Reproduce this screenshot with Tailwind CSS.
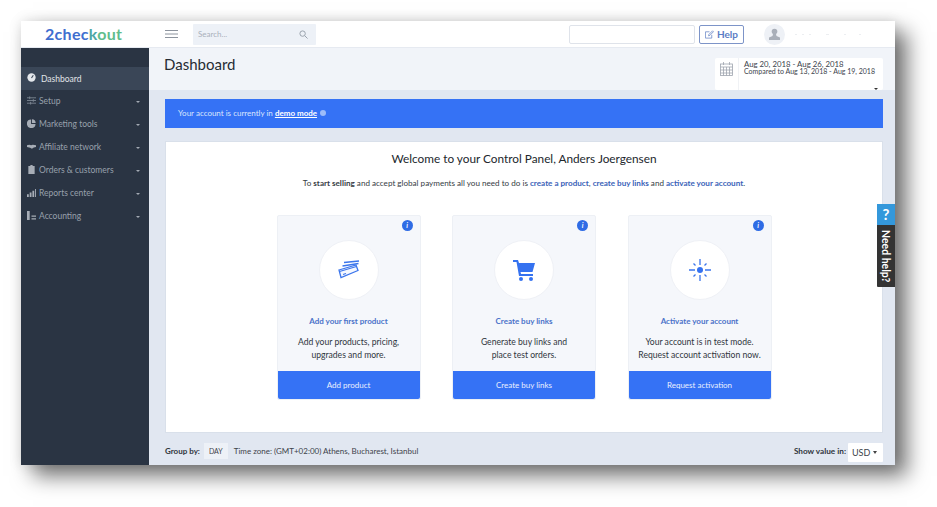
<!DOCTYPE html>
<html lang="en">
<head>
  <meta charset="UTF-8" />
  <title>2checkout Dashboard</title>
  <script src="https://cdn.jsdelivr.net/npm/@tailwindcss/browser@4"></script>
</head>
<body class="bg-white font-['Lato','Liberation_Sans',sans-serif] overflow-hidden">
<div class="w-[937px] h-[507px] pt-[21px] pl-[21px]">
  <div class="relative w-[874px] h-[444px] flex flex-col bg-white shadow-[12px_11px_20px_rgba(0,0,0,0.55),0_0_12px_rgba(0,0,0,0.12)]">

    <!-- Top bar -->
    <header class="h-[27px] shrink-0 flex items-center border-b border-[#e6eaf1]">
      <div class="w-[128px] shrink-0 pl-[24px] text-[16px] leading-none font-bold tracking-[0.3px] text-[#3f6ecf]">2chec<span class="text-[#4fa7a5]">k</span><span class="text-[#61bd8c]">out</span></div>
      <svg class="ml-[16px] w-[13px] h-[8px]" viewBox="0 0 13 8" fill="none" stroke="#8d949e"><path d="M0 .5h13M0 4h13M0 7.5h13"/></svg>
      <div class="ml-[15px] w-[123px] h-[21px] flex items-center justify-between px-[5px] bg-[#edf1f7] rounded-[1px]">
        <span class="text-[8px] text-[#a9b0bb]">Search...</span>
        <svg class="w-[9px] h-[9px] mr-[3px]" viewBox="0 0 10 10" fill="none" stroke="#9aa2ad" stroke-width="1.1"><circle cx="4" cy="4" r="3"/><path d="M6.3 6.3 9.500 9.500"/></svg>
      </div>
      <div class="ml-[253px] w-[126px] h-[19px] bg-white border border-[#dfe3ea] rounded-[2px]"></div>
      <div class="ml-[4px] w-[45px] h-[19px] flex items-center justify-center gap-[3px] border border-[#7d94c8] rounded-[2px] text-[#5a7cc4] text-[10px] font-bold">
        <svg class="w-[9px] h-[9px]" viewBox="0 0 10 10" fill="none" stroke="#6e8bc9" stroke-width=".9"><path d="M7.5 5.5v3.5h-7v-7h4.5M4 6.5l.3-1.500L8.400.9l1 1L5.400 6z"/></svg>
        Help
      </div>
      <div class="ml-[20px] w-[21px] h-[21px] rounded-full bg-[#eef1f6] flex items-center justify-center">
        <svg class="w-[13px] h-[13px]" viewBox="0 0 13 13" fill="#a9afb9"><circle cx="6.500" cy="3.600" r="2.800"/><path d="M5 6h3l.5 2 3.500 1.500V12H1V9.500L4.500 8z"/></svg>
      </div>
      <div class="ml-[10px] flex gap-[5px]">
        <span class="w-[2px] h-[1px] bg-[#eceef1]"></span><span class="w-[2px] h-[1px] bg-[#eceef1]"></span><span class="w-[2px] h-[1px] bg-[#eceef1]"></span>
        <span class="ml-[10px] w-[3px] h-[1px] bg-[#eceef1]"></span><span class="ml-[10px] w-[2px] h-[1px] bg-[#eceef1]"></span><span class="ml-[8px] w-[2px] h-[1px] bg-[#eceef1]"></span>
      </div>
    </header>

    <div class="flex flex-1 min-h-0">
      <!-- Sidebar -->
      <aside class="w-[128px] shrink-0 bg-[#2a3443] pt-[19px] text-[8.500px] text-[#98a0ab]">
        <div class="h-[23px] pt-[1px] flex items-center gap-[5px] pl-[6px] bg-[#3a4657] text-[#e1e4e8]">
          <svg class="w-[9px] h-[9px] -mt-[3px]" viewBox="0 0 10 10"><circle cx="5" cy="5" r="4.600" fill="#e5e8ec"/><path d="M5 5.500 7 2.500" stroke="#3a4657" stroke-width="1.200"/></svg>
          <span>Dashboard</span>
        </div>
        <div class="h-[23px] flex items-center pl-[6px] pr-[9px]">
          <svg class="w-[9px] h-[9px] mr-[3px] -mt-[3px]" viewBox="0 0 10 10" stroke="#7d8793" fill="none"><path d="M0 2h10M0 5h10M0 8h10M3 .5v3M7 3.500v3M4 6.500v3"/></svg>
          <span class="flex-1">Setup</span><span class="w-0 h-0 border-x-[2px] border-x-transparent border-t-[2px] border-t-[#a3aab4]"></span>
        </div>
        <div class="h-[23px] flex items-center pl-[6px] pr-[9px]">
          <svg class="w-[9px] h-[9px] mr-[3px] -mt-[3px]" viewBox="0 0 10 10" fill="#a7adb6"><path d="M4.500.5v5h5A4.800 4.800 0 1 1 4.500.5zM5.500.3a4.500 4.500 0 0 1 4.200 4.200H5.500z"/></svg>
          <span class="flex-1">Marketing tools</span><span class="w-0 h-0 border-x-[2px] border-x-transparent border-t-[2px] border-t-[#a3aab4]"></span>
        </div>
        <div class="h-[23px] flex items-center pl-[6px] pr-[9px]">
          <svg class="w-[9px] h-[9px] mr-[3px] -mt-[3px]" viewBox="0 0 10 10" fill="#a7adb6"><path d="M0 3.500l2.500-.5 2 .5 2-.5 3.500.5v2L7.500 6 5.500 7.500 3.500 6.500 0 5.500z"/></svg>
          <span class="flex-1">Affiliate network</span><span class="w-0 h-0 border-x-[2px] border-x-transparent border-t-[2px] border-t-[#a3aab4]"></span>
        </div>
        <div class="h-[23px] flex items-center pl-[6px] pr-[9px]">
          <svg class="w-[9px] h-[9px] mr-[3px] -mt-[3px]" viewBox="0 0 10 10" fill="#a7adb6"><path d="M1.500 1h2l.5-1h2l.5 1h2v9h-7z"/></svg>
          <span class="flex-1">Orders &amp; customers</span><span class="w-0 h-0 border-x-[2px] border-x-transparent border-t-[2px] border-t-[#a3aab4]"></span>
        </div>
        <div class="h-[23px] flex items-center pl-[6px] pr-[9px]">
          <svg class="w-[9px] h-[9px] mr-[3px] -mt-[3px]" viewBox="0 0 10 10" fill="#a7adb6"><path d="M0 7h2v3H0zM3 5h2v5H3zM6 3h2v7H6zM9 1h1v9H9z"/></svg>
          <span class="flex-1">Reports center</span><span class="w-0 h-0 border-x-[2px] border-x-transparent border-t-[2px] border-t-[#a3aab4]"></span>
        </div>
        <div class="h-[23px] flex items-center pl-[6px] pr-[9px]">
          <svg class="w-[9px] h-[9px] mr-[3px] -mt-[3px]" viewBox="0 0 10 10" fill="#a7adb6"><path d="M0 0h3v10H0zM5 5h5v1.500H5zM5 8h5v1.500H5z"/></svg>
          <span class="flex-1">Accounting</span><span class="w-0 h-0 border-x-[2px] border-x-transparent border-t-[2px] border-t-[#a3aab4]"></span>
        </div>
      </aside>

      <!-- Main -->
      <main class="flex-1 min-w-0 bg-[#e1e7f1] flex flex-col">
        <div class="h-[42px] shrink-0 bg-[#f1f4f9] flex justify-between pl-[15px] pr-[12px]">
          <h1 class="mt-[6px] text-[15px] leading-[20px] text-[#262c33]">Dashboard</h1>
          <div class="relative mt-[10px] w-[168px] h-[32px] bg-white rounded-[2px] flex">
            <div class="w-[24px] flex justify-center pt-[4px] border-r border-[#f0f2f5]">
              <svg class="w-[13px] h-[14px]" viewBox="0 0 13 14" fill="none" stroke="#9fa5af" stroke-width=".8"><rect x=".5" y="2" width="12" height="11.500"/><path d="M.5 5h12M.5 8h12M.5 11h12M3.500 5v8.500M6.500 5v8.500M9.500 5v8.500M3.500 0v3M9.500 0v3"/></svg>
            </div>
            <div class="pl-[5px] pt-[2px] text-[#3c434c] whitespace-nowrap">
              <div class="text-[7.800px] leading-[8px]">Aug 20, 2018 - Aug 26, 2018</div>
              <div class="text-[7px] leading-[7px]">Compared to Aug 13, 2018 - Aug 19, 2018</div>
            </div>
            <span class="absolute right-[5px] bottom-[0px] w-0 h-0 border-x-[2px] border-x-transparent border-t-[2px] border-t-[#333]"></span>
          </div>
        </div>

        <div class="mt-[9px] ml-[16px] mr-[12px] h-[29px] pb-[1px] shrink-0 bg-[#3572f5] flex items-center pl-[13px] text-[8px] text-[#dbe6fd]">
          Your account is currently in&nbsp;<span class="font-bold text-white underline">demo mode</span>
          <span class="ml-[3px] w-[6px] h-[6px] rounded-full bg-[#9dbcf9]"></span>
        </div>

        <section class="mt-[13px] ml-[16px] mr-[12px] h-[292px] shrink-0 bg-white border border-[#d9e0ea] flex flex-col items-center">
          <h2 class="mt-[8px] text-[11.800px] leading-[18px] text-[#22272d]">Welcome to your Control Panel, Anders Joergensen</h2>
          <p class="mt-[9px] text-[8.100px] leading-[12px] text-[#363c44]">To <b>start selling</b> and accept global payments all you need to do is <b class="text-[#3a62b8]">create a product</b>, <b class="text-[#3a62b8]">create buy links</b> and <b class="text-[#3a62b8]">activate your account</b>.</p>

          <div class="mt-[26px] flex gap-[31.500px]">
            <div class="relative w-[144px] h-[185px] bg-[#f5f7fb] border border-[#edf0f5] rounded-[2px] flex flex-col items-center">
              <span class="absolute top-[4px] right-[7px] w-[11px] h-[11px] rounded-full bg-[#2f6ce5] text-white text-[7px] leading-[11px] text-center italic font-bold">i</span>
              <div class="mt-[24px] w-[60px] h-[60px] rounded-full bg-white border border-[#eff1f6] flex items-center justify-center">
                <svg class="w-[22px] h-[20px]" viewBox="0 0 22 20" fill="none" stroke="#3b75ec" stroke-width="1.300"><path d="M6 2.500 21 1M4.500 6l16-2.500"/><path d="M1 10 18 5l2 5.500L3 17.500z" fill="#f5f8ff"/><path d="M1.500 11.500 18.500 6.500M5 14.500l3-1"/></svg>
              </div>
              <div class="mt-[15px] text-[8px] leading-[12px] font-bold text-[#4a72c9]">Add your first product</div>
              <div class="mt-[9px] text-[8.600px] leading-[13px] text-[#30363d] text-center">Add your products, pricing,<br>upgrades and more.</div>
              <div class="mt-auto w-full h-[28px] bg-[#3572f5] rounded-b-[2px] flex items-center justify-center text-[8px] text-[#eaf0fe]">Add product</div>
            </div>

            <div class="relative w-[144px] h-[185px] bg-[#f5f7fb] border border-[#edf0f5] rounded-[2px] flex flex-col items-center">
              <span class="absolute top-[4px] right-[7px] w-[11px] h-[11px] rounded-full bg-[#2f6ce5] text-white text-[7px] leading-[11px] text-center italic font-bold">i</span>
              <div class="mt-[24px] w-[60px] h-[60px] rounded-full bg-white border border-[#eff1f6] flex items-center justify-center">
                <svg class="w-[22px] h-[21px]" viewBox="0 0 22 21" fill="#3572f0"><path d="M0 0h5l1 3h16l-2.500 9H7.500l.5 2h12v2H6L3.500 2H0z"/><circle cx="8" cy="19" r="2"/><circle cx="18" cy="19" r="2"/></svg>
              </div>
              <div class="mt-[15px] text-[8px] leading-[12px] font-bold text-[#4a72c9]">Create buy links</div>
              <div class="mt-[9px] text-[8.600px] leading-[13px] text-[#30363d] text-center">Generate buy links and<br>place test orders.</div>
              <div class="mt-auto w-full h-[28px] bg-[#3572f5] rounded-b-[2px] flex items-center justify-center text-[8px] text-[#eaf0fe]">Create buy links</div>
            </div>

            <div class="relative w-[144px] h-[185px] bg-[#f5f7fb] border border-[#edf0f5] rounded-[2px] flex flex-col items-center">
              <span class="absolute top-[4px] right-[7px] w-[11px] h-[11px] rounded-full bg-[#2f6ce5] text-white text-[7px] leading-[11px] text-center italic font-bold">i</span>
              <div class="mt-[24px] w-[60px] h-[60px] rounded-full bg-white border border-[#eff1f6] flex items-center justify-center">
                <svg class="w-[22px] h-[22px]" viewBox="0 0 22 22" fill="none" stroke="#3b75ec" stroke-width="1.300"><circle cx="11" cy="11" r="3" fill="#3572f0" stroke="none"/><path d="M11 0v6M11 16v6M0 11h6M16 11h6M4.500 4.500l2 2M15.500 15.500l2 2M17.500 4.500l-2 2M6.500 15.500l-2 2"/></svg>
              </div>
              <div class="mt-[15px] text-[8px] leading-[12px] font-bold text-[#4a72c9]">Activate your account</div>
              <div class="mt-[9px] text-[8.600px] leading-[13px] text-[#30363d] text-center">Your account is in test mode.<br>Request account activation now.</div>
              <div class="mt-auto w-full h-[28px] bg-[#3572f5] rounded-b-[2px] flex items-center justify-center text-[8px] text-[#eaf0fe]">Request activation</div>
            </div>
          </div>
        </section>

        <footer class="flex-1 flex items-start justify-between pt-[10px] pl-[16px] pr-[12px] text-[8px] text-[#3d434b]">
          <div class="flex items-center h-[16px]">
            <b class="text-[#2f353c]">Group by:</b>
            <span class="ml-[4px] px-[5px] h-[16px] flex items-center bg-[#edf1f7] text-[7px]">DAY</span>
            <span class="ml-[6px]">Time zone: (GMT+02:00) Athens, Bucharest, Istanbul</span>
          </div>
          <div class="flex items-center h-[17px]">
            <b class="text-[8.200px] text-[#2f353c]">Show value in:</b>
            <span class="ml-[2px] self-start w-[35px] h-[19px] pl-[4px] pr-[6px] flex items-center justify-between bg-white rounded-[1px] text-[9px]">USD<span class="w-0 h-0 border-x-[2.500px] border-x-transparent border-t-[3px] border-t-[#444]"></span></span>
          </div>
        </footer>
      </main>
    </div>

    <!-- Need help tab -->
    <div class="absolute right-0 top-[183px] w-[18px]">
      <div class="h-[21px] bg-[#3498db] text-white font-bold text-[15px] leading-[21px] text-center">?</div>
      <div class="h-[62px] bg-[#333] flex items-center justify-center rounded-bl-[1px]">
        <span class="[writing-mode:vertical-rl] text-white font-bold text-[10.500px] leading-none">Need help?</span>
      </div>
    </div>
  </div>
</div>
</body>
</html>
